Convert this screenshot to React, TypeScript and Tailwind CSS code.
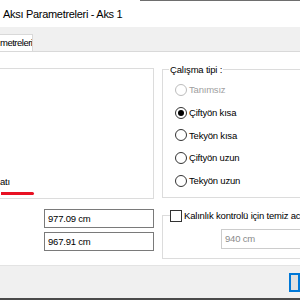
function Radio({ label, checked = false, disabled = false }: { label: string; checked?: boolean; disabled?: boolean }) {
    return (
        <div className="flex h-[22.75px] items-center gap-[2px]">
            <span
                className={`flex h-[12px] w-[12px] shrink-0 items-center justify-center rounded-full border bg-white ${
                    disabled ? 'border-[#bcbcbc]' : 'border-[#333333]'
                }`}
            >
                {checked && <span className="h-[6px] w-[6px] rounded-full bg-[#000000]" />}
            </span>
            <span className={disabled ? 'text-[#a0a0a0]' : 'text-black'}>{label}</span>
        </div>
    );
}

function Field({ value }: { value: string }) {
    return (
        <div className="flex h-[19px] w-[110px] items-center border border-[#7a7a7a] bg-white pl-[3px] text-black">
            {value}
        </div>
    );
}

export default function App() {
    return (
        <div className="flex h-[300px] w-[300px] flex-col overflow-hidden bg-[#f0f0f0] text-[9.5px] tracking-[-0.2px] font-['Liberation_Sans',Arial,sans-serif] leading-none">
            {/* window edge */}
            <div className="flex h-px shrink-0">
                <div className="w-[140px] bg-white" />
                <div className="flex-1 bg-[#6e6e6e]" />
            </div>

            {/* title bar */}
            <div className="flex h-[26px] shrink-0 items-center bg-white pl-[3px] text-[11px] tracking-[-0.3px] text-black">
                Aksı Parametreleri - Aks 1
            </div>

            {/* tabs */}
            <div className="mt-[7px] flex h-[17px] shrink-0">
                <div className="flex w-[33px] items-center overflow-hidden border-r border-t border-[#d9d9d9] bg-white">
                    <span className="whitespace-nowrap tracking-[-0.5px]">metreleri</span>
                </div>
            </div>

            {/* tab page */}
            <div className="flex h-[214px] shrink-0 flex-col overflow-hidden border-t border-[#d9d9d9] bg-white">
                <div className="mt-[16px] flex items-start">
                    <div className="-ml-[10px] flex h-[131px] w-[164px] shrink-0 flex-col justify-end border border-[#dcdcdc] pb-[3px] pl-[10px]">
                        <span className="-ml-[1px] whitespace-nowrap">atı</span>
                        <div className="mt-[6px] h-[3px] w-[33px] rounded-r-full bg-[#e81123]" />
                    </div>

                    <div className="ml-[8px] mt-[1px] flex h-[129px] w-[160px] shrink-0 flex-col border border-[#dcdcdc] pl-[12px]">
                        <span className="-mt-[5px] ml-[-6px] w-fit bg-white px-[1px]">Çalışma tipi :</span>
                        <div className="mt-[4px] flex flex-col">
                            <Radio label="Tanımsız" disabled />
                            <Radio label="Çiftyön kısa" checked />
                            <Radio label="Tekyön kısa" />
                            <Radio label="Çiftyön uzun" />
                            <Radio label="Tekyön uzun" />
                        </div>
                    </div>
                </div>

                <div className="mt-[10px] flex items-start">
                    <div className="ml-[44px] flex shrink-0 flex-col gap-[4px]">
                        <Field value="977.09 cm" />
                        <Field value="967.91 cm" />
                    </div>

                    <div className="ml-[8px] mt-[6px] flex h-[44px] w-[160px] shrink-0 flex-col border border-[#dcdcdc]">
                        <label className="-mt-[6px] ml-[7px] flex w-fit items-center gap-[2px] whitespace-nowrap bg-white pr-[1px]">
                            <span className="h-[12px] w-[12px] shrink-0 border border-[#333333] bg-white" />
                            Kalınlık kontrolü için temiz ac
                        </label>
                        <div className="ml-[58px] mt-[7px] flex h-[20px] w-[100px] items-center border border-[#cccccc] bg-white pl-[3px] text-[#8a8a8a]">
                            940 cm
                        </div>
                    </div>
                </div>
            </div>

            {/* footer */}
            <div className="flex h-[33px] shrink-0 justify-end border-t border-[#e3e3e3] pt-[7px]">
                <div className="h-[19px] w-[11px] border-2 border-[#0078d7] bg-[#e1e1e1]" />
            </div>

            <div className="h-[2px] shrink-0 bg-[#4a4a4a]" />
        </div>
    );
}
